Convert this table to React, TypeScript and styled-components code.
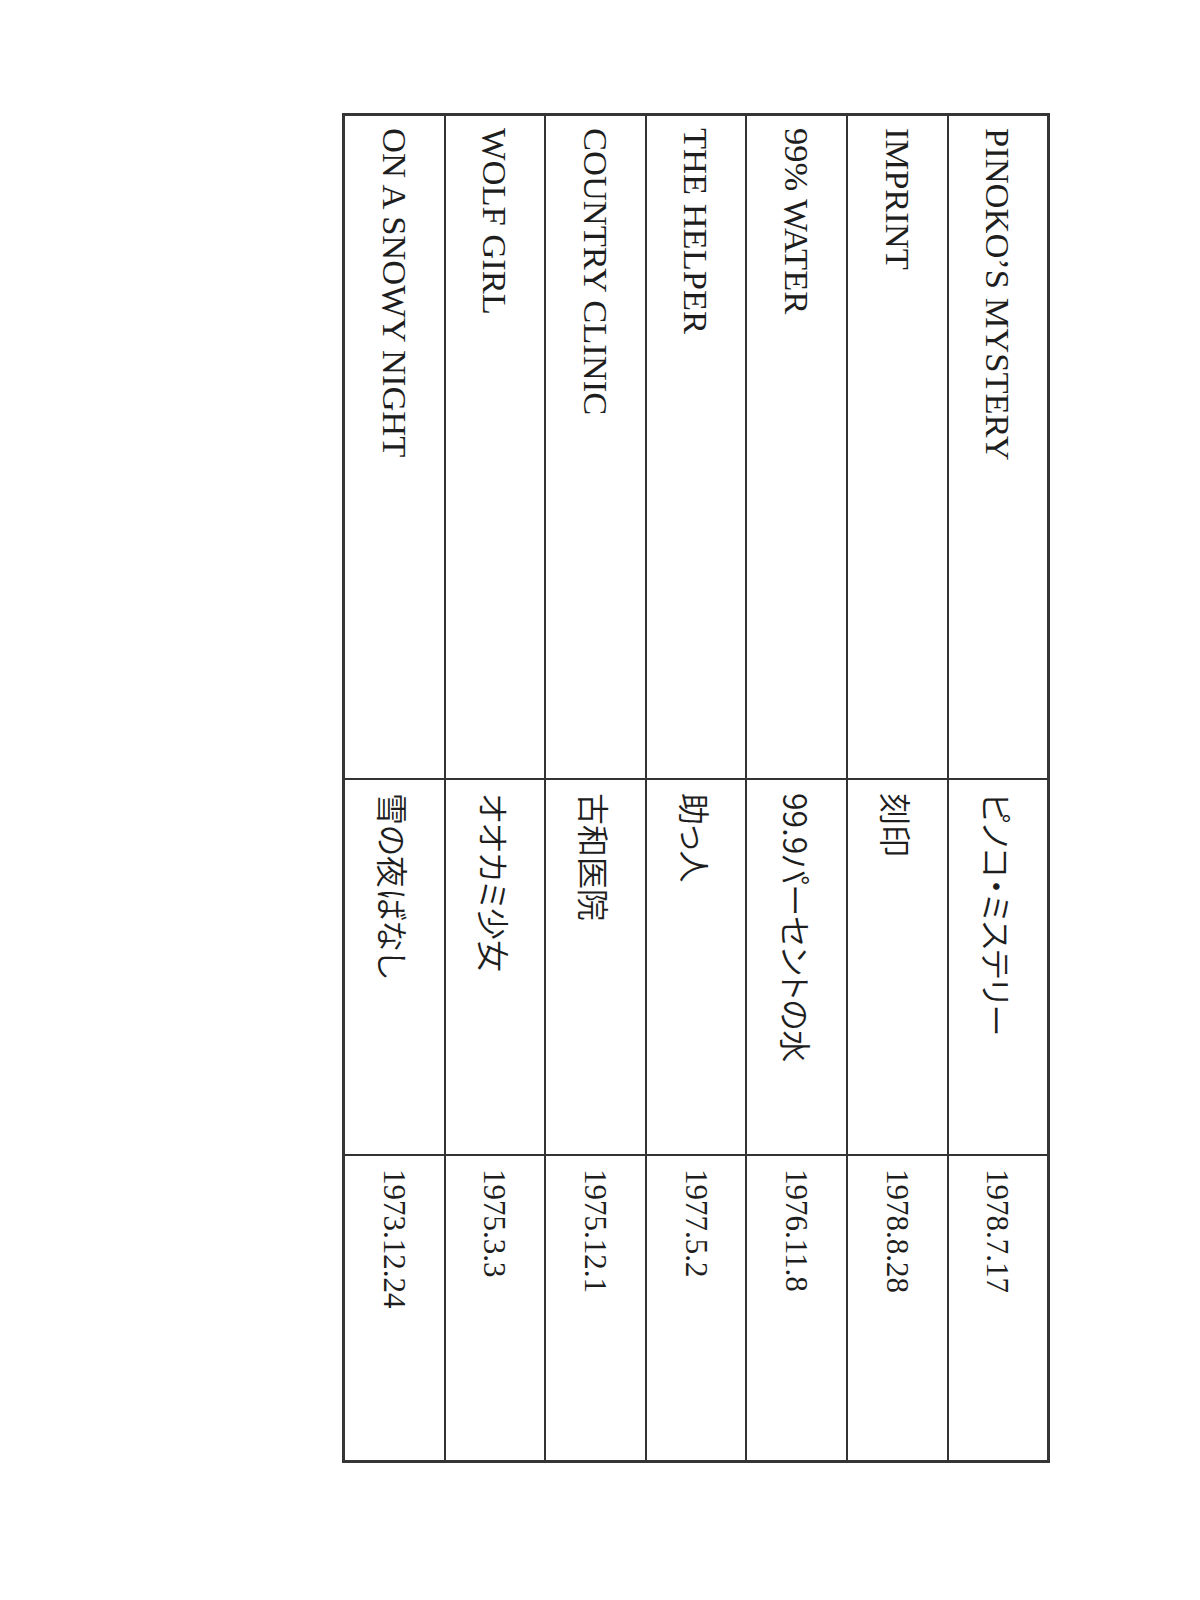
import { Fragment } from "react";
import styled, { createGlobalStyle } from "styled-components";

const GlobalStyle = createGlobalStyle`
  html, body {
    margin: 0;
    padding: 0;
    background: #ffffff;
  }
`;

const Page = styled.div`
  width: 1200px;
  min-height: 1600px;
  padding: 113px 0 0 342px;
  box-sizing: border-box;
`;

// the whole sheet is set sideways: rows run right to left, cells top to bottom
const Table = styled.div`
  writing-mode: vertical-rl;
  text-orientation: sideways;
  display: grid;
  grid-template-columns: 662px 374px 304px;
  grid-auto-rows: 98.6px;
  gap: 2px;
  width: max-content;
  background: #333333;
  border: 3px solid #353535;
`;

const Cell = styled.div`
  display: flex;
  align-items: center;
  background: #ffffff;
  color: #1e1e1e;
  padding-inline-start: 13px;
  line-height: 1;
  white-space: nowrap;
`;

const TitleCell = styled(Cell)`
  padding-inline-start: 12px;
  font-family: "Liberation Serif", "Times New Roman", serif;
  font-size: 34.5px;
`;

const JpCell = styled(Cell)`
  font-family: "Noto Sans CJK JP", "Noto Sans", sans-serif;
  font-weight: 350;
  font-size: 32px;
  font-feature-settings: "palt";
`;

const DateCell = styled(Cell)`
  font-family: "Liberation Serif", "Times New Roman", serif;
  font-size: 31px;
`;

const works = [
  { title: "PINOKO’S MYSTERY", jp: "ピノコ・ミステリー", date: "1978.7.17" },
  { title: "IMPRINT", jp: "刻印", date: "1978.8.28" },
  { title: "99% WATER", jp: "99.9パーセントの水", date: "1976.11.8" },
  { title: "THE HELPER", jp: "助っ人", date: "1977.5.2" },
  { title: "COUNTRY CLINIC", jp: "古和医院", date: "1975.12.1" },
  { title: "WOLF GIRL", jp: "オオカミ少女", date: "1975.3.3" },
  { title: "ON A SNOWY NIGHT", jp: "雪の夜ばなし", date: "1973.12.24" },
];

function App() {
  return (
    <>
      <GlobalStyle />
      <Page>
        <Table>
          {works.map((w) => (
            <Fragment key={w.title}>
              <TitleCell>{w.title}</TitleCell>
              <JpCell>{w.jp}</JpCell>
              <DateCell>{w.date}</DateCell>
            </Fragment>
          ))}
        </Table>
      </Page>
    </>
  );
}

export default App;
